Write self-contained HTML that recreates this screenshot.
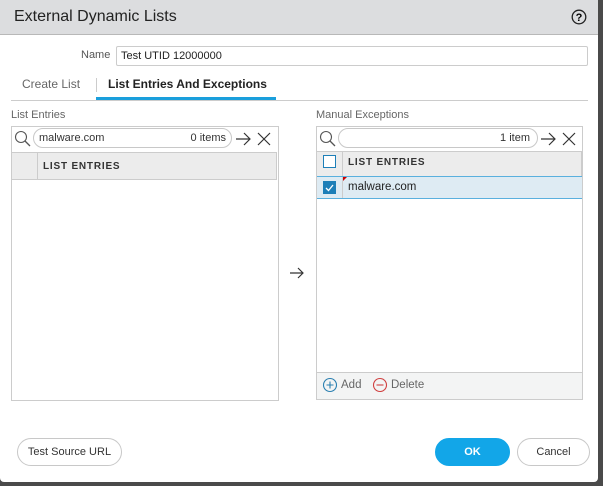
<!DOCTYPE html><html><head><style>
*{box-sizing:border-box;margin:0;padding:0}
body{width:603px;height:486px;background:#4a4a4a;font-family:"Liberation Sans",sans-serif;position:relative;overflow:hidden;color:#333}
.a{position:absolute}
#dlg{left:0;top:0;width:598px;height:482px;background:#fff;border-radius:0 0 4px 4px}
.hd{left:0;top:0;width:598px;height:35px;background:#dcdddf;border-bottom:1px solid #b8b8b8}
.t{font-size:12px}
.lh{font-size:10px;font-weight:bold;letter-spacing:.8px;color:#333}
.pill{border:1px solid #c8c8c8;border-radius:11px;height:20px;line-height:18px}
.btn{border:1px solid #c8c8c8;border-radius:14px;height:28px;font-size:11px;text-align:center;line-height:26px;background:#fff}
</style></head><body>
<div id="dlg" class="a">
<div class="a hd"></div>
<div class="a" style="left:14px;top:8px;font-size:16px;color:#222">External Dynamic Lists</div>
<svg class="a" style="left:571px;top:9px" width="16" height="16"><circle cx="8" cy="8" r="6.8" fill="none" stroke="#222" stroke-width="1.3"/><text x="8" y="12" font-size="11" font-weight="bold" text-anchor="middle" font-family="Liberation Sans">?</text></svg>
<div class="a t" style="left:81px;top:49px;color:#555;font-size:11px">Name</div>
<div class="a" style="left:116px;top:46px;width:472px;height:20px;border:1px solid #ccc;border-radius:2px;font-size:11px;padding:0 4px;line-height:18px;color:#222">Test UTID 12000000</div>
<div class="a t" style="left:22px;top:77px;color:#666">Create List</div>
<div class="a" style="left:96px;top:78px;width:1px;height:14px;background:#ccc"></div>
<div class="a t" style="left:108px;top:77px;font-weight:bold;color:#222">List Entries And Exceptions</div>
<div class="a" style="left:11px;top:100px;width:577px;height:1px;background:#ccc"></div>
<div class="a" style="left:96px;top:97px;width:180px;height:3px;background:#1a9fdc"></div>
<div class="a" style="left:11px;top:109px;font-size:11px;color:#666">List Entries</div>
<div class="a" style="left:316px;top:109px;font-size:11px;color:#666">Manual Exceptions</div>
<div class="a" style="left:11px;top:126px;width:268px;height:275px;border:1px solid #ccc"></div>
<svg class="a" style="left:14px;top:130px" width="18" height="18"><circle cx="7" cy="7" r="5.5" fill="none" stroke="#555" stroke-width="1.1"/><line x1="11" y1="11" x2="16" y2="16" stroke="#555" stroke-width="1.3"/></svg>
<div class="a pill" style="left:33px;top:128px;width:199px;font-size:11px;padding:0 5px;color:#333">malware.com<span style="float:right">0 items</span></div>
<svg class="a" style="left:235px;top:131px" width="40" height="16"><path d="M1 8H15M9 2L15 8L9 14" fill="none" stroke="#333" stroke-width="1.2"/><path d="M23 2L35 14M35 2L23 14" stroke="#333" stroke-width="1.2"/></svg>
<div class="a" style="left:12px;top:152px;width:265px;height:28px;background:#ececec;border-top:1px solid #ccc;border-bottom:1px solid #ccc;border-right:1px solid #ccc"></div>
<div class="a" style="left:37px;top:153px;width:1px;height:26px;background:#ccc"></div>
<div class="a lh" style="left:43px;top:161px">LIST ENTRIES</div>
<svg class="a" style="left:289px;top:266px" width="16" height="14"><path d="M1 7H14M9 2L14 7L9 12" fill="none" stroke="#333" stroke-width="1.2"/></svg>
<div class="a" style="left:316px;top:126px;width:267px;height:274px;border:1px solid #ccc"></div>
<svg class="a" style="left:319px;top:130px" width="18" height="18"><circle cx="7" cy="7" r="5.5" fill="none" stroke="#555" stroke-width="1.1"/><line x1="11" y1="11" x2="16" y2="16" stroke="#555" stroke-width="1.3"/></svg>
<div class="a pill" style="left:338px;top:128px;width:200px;font-size:11px;padding:0 7px;color:#333;text-align:right">1 item</div>
<svg class="a" style="left:540px;top:131px" width="40" height="16"><path d="M1 8H15M9 2L15 8L9 14" fill="none" stroke="#333" stroke-width="1.2"/><path d="M23 2L35 14M35 2L23 14" stroke="#333" stroke-width="1.2"/></svg>
<div class="a" style="left:317px;top:151px;width:265px;height:25px;background:#ececec;border-top:1px solid #ccc;border-right:1px solid #ccc"></div>
<div class="a" style="left:342px;top:152px;width:1px;height:46px;background:#ccc"></div>
<div class="a" style="left:323px;top:155px;width:13px;height:13px;border:1.5px solid #1d7fb8;background:#fff"></div>
<div class="a lh" style="left:348px;top:157px">LIST ENTRIES</div>
<div class="a" style="left:317px;top:176px;width:265px;height:23px;background:#deebf3;border-top:1px solid #5ab0de;border-bottom:1px solid #5ab0de"></div>
<div class="a" style="left:342px;top:177px;width:1px;height:21px;background:#ccc"></div>
<div class="a" style="left:323px;top:181px;width:13px;height:13px;background:#1d7fb8"></div>
<svg class="a" style="left:323px;top:181px" width="13" height="13"><path d="M3 7L5.5 9.5L10 4" fill="none" stroke="#fff" stroke-width="1.3"/></svg>
<svg class="a" style="left:343px;top:177px" width="5" height="5"><path d="M0 0H4L0 4Z" fill="#c00"/></svg>
<div class="a t" style="left:348px;top:181px;font-size:11.5px;color:#222">malware.com</div>
<div class="a" style="left:317px;top:372px;width:265px;height:27px;background:#f3f4f4;border-top:1px solid #ccc"></div>
<svg class="a" style="left:322px;top:377px" width="16" height="16"><circle cx="8" cy="8" r="6.5" fill="none" stroke="#2a7fb0" stroke-width="1.1"/><path d="M8 4.5V11.5M4.5 8H11.5" stroke="#2a7fb0" stroke-width="1.1"/></svg>
<div class="a" style="left:341px;top:379px;font-size:11.5px;color:#666">Add</div>
<svg class="a" style="left:372px;top:377px" width="16" height="16"><circle cx="8" cy="8" r="6.5" fill="none" stroke="#d04040" stroke-width="1.1"/><path d="M4.5 8H11.5" stroke="#d04040" stroke-width="1.1"/></svg>
<div class="a" style="left:391px;top:379px;font-size:11.5px;color:#666">Delete</div>
<div class="a btn" style="left:17px;top:438px;width:105px">Test Source URL</div>
<div class="a btn" style="left:435px;top:438px;width:75px;background:#12a6e8;border-color:#12a6e8;color:#fff;font-weight:bold">OK</div>
<div class="a btn" style="left:517px;top:438px;width:73px">Cancel</div>
</div>
</body></html>
